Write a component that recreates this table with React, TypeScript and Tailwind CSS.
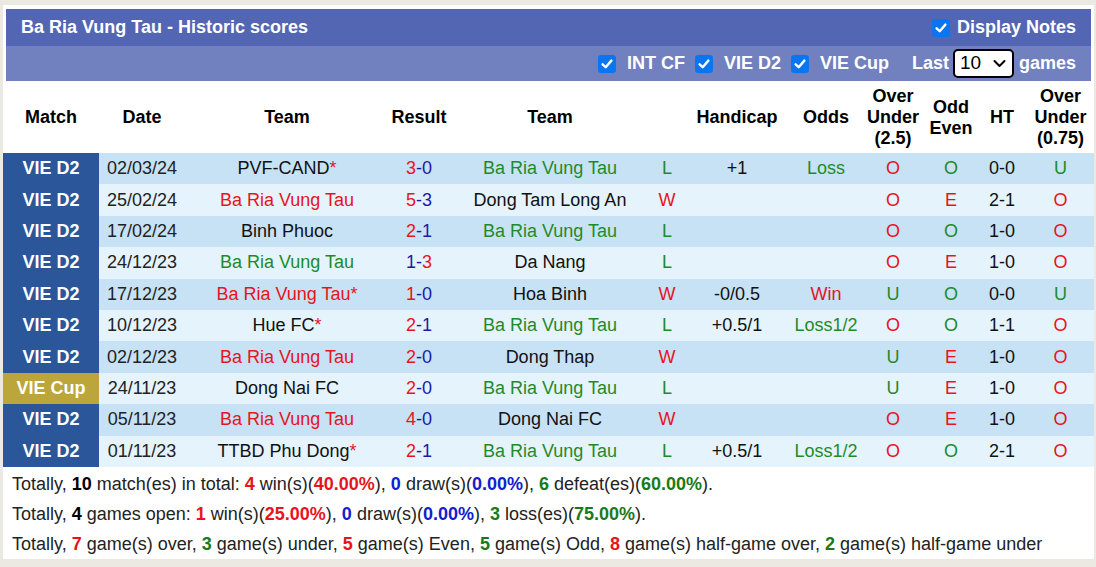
import React from "react";

const RED = "text-[#e8141c]";
const GREEN = "text-[#1f8a2a]";
const BLUE = "text-[#1a1aa8]";

type Row = {
  comp: string;
  cup?: boolean;
  date: string;
  home: string;
  homeColor: string;
  homeStar?: boolean;
  s1: number;
  s2: number;
  away: string;
  awayColor: string;
  wl: "W" | "L";
  hcp: string;
  odds: string;
  ou: string;
  oe: string;
  ht: string;
  ou2: string;
};

const BR = "Ba Ria Vung Tau";
const rows: Row[] = [
  { comp: "VIE D2", date: "02/03/24", home: "PVF-CAND", homeColor: "text-[#111]", homeStar: true, s1: 3, s2: 0, away: BR, awayColor: GREEN, wl: "L", hcp: "+1", odds: "Loss", ou: "O", oe: "O", ht: "0-0", ou2: "U" },
  { comp: "VIE D2", date: "25/02/24", home: BR, homeColor: RED, s1: 5, s2: 3, away: "Dong Tam Long An", awayColor: "text-[#111]", wl: "W", hcp: "", odds: "", ou: "O", oe: "E", ht: "2-1", ou2: "O" },
  { comp: "VIE D2", date: "17/02/24", home: "Binh Phuoc", homeColor: "text-[#111]", s1: 2, s2: 1, away: BR, awayColor: GREEN, wl: "L", hcp: "", odds: "", ou: "O", oe: "O", ht: "1-0", ou2: "O" },
  { comp: "VIE D2", date: "24/12/23", home: BR, homeColor: GREEN, s1: 1, s2: 3, away: "Da Nang", awayColor: "text-[#111]", wl: "L", hcp: "", odds: "", ou: "O", oe: "E", ht: "1-0", ou2: "O" },
  { comp: "VIE D2", date: "17/12/23", home: BR, homeColor: RED, homeStar: true, s1: 1, s2: 0, away: "Hoa Binh", awayColor: "text-[#111]", wl: "W", hcp: "-0/0.5", odds: "Win", ou: "U", oe: "O", ht: "0-0", ou2: "U" },
  { comp: "VIE D2", date: "10/12/23", home: "Hue FC", homeColor: "text-[#111]", homeStar: true, s1: 2, s2: 1, away: BR, awayColor: GREEN, wl: "L", hcp: "+0.5/1", odds: "Loss1/2", ou: "O", oe: "O", ht: "1-1", ou2: "O" },
  { comp: "VIE D2", date: "02/12/23", home: BR, homeColor: RED, s1: 2, s2: 0, away: "Dong Thap", awayColor: "text-[#111]", wl: "W", hcp: "", odds: "", ou: "U", oe: "E", ht: "1-0", ou2: "O" },
  { comp: "VIE Cup", cup: true, date: "24/11/23", home: "Dong Nai FC", homeColor: "text-[#111]", s1: 2, s2: 0, away: BR, awayColor: GREEN, wl: "L", hcp: "", odds: "", ou: "U", oe: "E", ht: "1-0", ou2: "O" },
  { comp: "VIE D2", date: "05/11/23", home: BR, homeColor: RED, s1: 4, s2: 0, away: "Dong Nai FC", awayColor: "text-[#111]", wl: "W", hcp: "", odds: "", ou: "O", oe: "E", ht: "1-0", ou2: "O" },
  { comp: "VIE D2", date: "01/11/23", home: "TTBD Phu Dong", homeColor: "text-[#111]", homeStar: true, s1: 2, s2: 1, away: BR, awayColor: GREEN, wl: "L", hcp: "+0.5/1", odds: "Loss1/2", ou: "O", oe: "O", ht: "2-1", ou2: "O" },
];

const GRID =
  "grid grid-cols-[96px_86px_204px_60px_202px_32px_108px_70px_64px_52px_50px_67px]";

function Check() {
  return (
    <span className="inline-flex h-[18px] w-[18px] shrink-0 items-center justify-center rounded-[3px] bg-[#0a75f0]">
      <svg width="14" height="14" viewBox="0 0 14 14">
        <path d="M2.6 7.3 L5.7 10.2 L11.4 3.6" fill="none" stroke="white" strokeWidth="2.4" strokeLinecap="round" strokeLinejoin="round" />
      </svg>
    </span>
  );
}

function Score({ a, b }: { a: number; b: number }) {
  if (a >= b) {
    return (
      <span>
        <span className={RED}>{a}</span>
        <span className={BLUE}>-{b}</span>
      </span>
    );
  }
  return (
    <span>
      <span className={BLUE}>{a}-</span>
      <span className={RED}>{b}</span>
    </span>
  );
}

const ouColor = (v: string) => (v === "O" ? RED : GREEN);
const oeColor = (v: string) => (v === "O" ? GREEN : RED);
const oddsColor = (v: string) => (v === "Win" ? RED : GREEN);

export default function App() {
  return (
    <div
      className="h-[567px] w-[1096px] overflow-hidden bg-[#ebe9e1] pt-[5px] pl-[3px]"
      style={{ fontFamily: '"Liberation Sans", Arial, sans-serif' }}
    >
      <div className="w-[1091px] bg-white">
        <div className="px-[3px] pt-[4px]">
          <div className="flex h-[37px] items-center justify-between bg-[#5366b4] pl-[15px] pr-[15px] text-[18px] font-bold text-white">
            <span>Ba Ria Vung Tau - Historic scores</span>
            <span className="flex items-center gap-[7px]">
              <Check />
              <span>Display Notes</span>
            </span>
          </div>
          <div className="flex h-[35px] items-center justify-end bg-[#7181c0] pr-[15px] text-[18px] font-bold text-white">
            <Check />
            <span className="ml-[11px]">INT CF</span>
            <span className="ml-[10px] flex"><Check /></span>
            <span className="ml-[11px]">VIE D2</span>
            <span className="ml-[10px] flex"><Check /></span>
            <span className="ml-[11px]">VIE Cup</span>
            <span className="ml-[23px]">Last</span>
            <span className="ml-[4px] flex h-[29px] w-[61px] items-center justify-between rounded-[5px] border-2 border-black bg-white pl-[5px] pr-[6px] text-[19px] font-normal text-black">
              <span>10</span>
              <svg width="13" height="9" viewBox="0 0 13 9">
                <path d="M1.5 2 L6.5 7 L11.5 2" fill="none" stroke="black" strokeWidth="2" strokeLinecap="round" strokeLinejoin="round" />
              </svg>
            </span>
            <span className="ml-[5px]">games</span>
          </div>
        </div>

        <div className={`${GRID} h-[72px] items-center pt-[1px] text-center text-[18px] font-bold leading-[21px] text-black`}>
          <div>Match</div>
          <div>Date</div>
          <div>Team</div>
          <div>Result</div>
          <div>Team</div>
          <div></div>
          <div>Handicap</div>
          <div>Odds</div>
          <div>Over<br />Under<br />(2.5)</div>
          <div>Odd<br />Even</div>
          <div>HT</div>
          <div>Over<br />Under<br />(0.75)</div>
        </div>

        {rows.map((r, i) => (
          <div
            key={i}
            className={`${GRID} h-[31.4px] items-center text-center text-[18px] text-[#222] ${
              i % 2 === 0 ? "bg-[#c7e2f5]" : "bg-[#e4f3fc]"
            }`}
          >
            <div
              className={`flex h-full items-center justify-center font-bold text-white ${
                r.cup ? "bg-[#bca53a]" : "bg-[#2b5699]"
              }`}
            >
              {r.comp}
            </div>
            <div>{r.date}</div>
            <div className={r.homeColor}>
              {r.home}
              {r.homeStar && <span className={RED}>*</span>}
            </div>
            <div>
              <Score a={r.s1} b={r.s2} />
            </div>
            <div className={r.awayColor}>{r.away}</div>
            <div className={r.wl === "W" ? RED : GREEN}>{r.wl}</div>
            <div className="text-[#111]">{r.hcp}</div>
            <div className={oddsColor(r.odds)}>{r.odds}</div>
            <div className={ouColor(r.ou)}>{r.ou}</div>
            <div className={oeColor(r.oe)}>{r.oe}</div>
            <div className="text-[#111]">{r.ht}</div>
            <div className={ouColor(r.ou2)}>{r.ou2}</div>
          </div>
        ))}

        <div className="pt-[3px] pb-[0px] pl-[9px] text-[18px] text-[#222]">
          <div className="flex h-[30px] items-center whitespace-pre">
            <span>Totally, <b className="text-black">10</b> match(es) in total: <b className={RED}>4</b> win(s)(<b className={RED}>40.00%</b>), <b className="text-[#1020d0]">0</b> draw(s)(<b className="text-[#1020d0]">0.00%</b>), <b className="text-[#1a7a1a]">6</b> defeat(es)(<b className="text-[#1a7a1a]">60.00%</b>).</span>
          </div>
          <div className="flex h-[30px] items-center whitespace-pre">
            <span>Totally, <b className="text-black">4</b> games open: <b className={RED}>1</b> win(s)(<b className={RED}>25.00%</b>), <b className="text-[#1020d0]">0</b> draw(s)(<b className="text-[#1020d0]">0.00%</b>), <b className="text-[#1a7a1a]">3</b> loss(es)(<b className="text-[#1a7a1a]">75.00%</b>).</span>
          </div>
          <div className="flex h-[29px] items-center whitespace-pre">
            <span>Totally, <b className={RED}>7</b> game(s) over, <b className="text-[#1a7a1a]">3</b> game(s) under, <b className={RED}>5</b> game(s) Even, <b className="text-[#1a7a1a]">5</b> game(s) Odd, <b className={RED}>8</b> game(s) half-game over, <b className="text-[#1a7a1a]">2</b> game(s) half-game under</span>
          </div>
        </div>
      </div>
    </div>
  );
}
